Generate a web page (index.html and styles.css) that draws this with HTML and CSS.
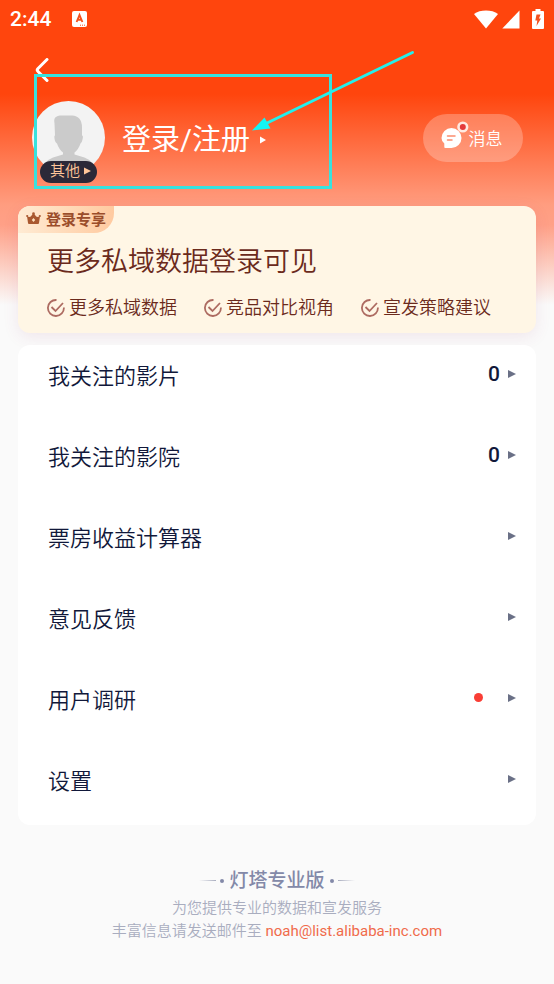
FILE: index.html
```html
<!DOCTYPE html>
<html lang="zh-CN">
<head>
<meta charset="utf-8">
<meta name="viewport" content="width=device-width, initial-scale=1">
<title>灯塔专业版</title>
<link rel="stylesheet" href="styles.css">
</head>
<body>
<div class="page">
  <header class="status">
    <span class="time">2:44</span>
    <svg class="app-badge" width="15" height="16" viewBox="0 0 15 16" aria-hidden="true">
      <rect width="15" height="16" rx="2" fill="#fff"/>
      <path d="M4.600 11 7.500 4 10.400 11M5.600 8.800h3.800" fill="none" stroke="#f4511e" stroke-width="1.900"/>
      <path d="M8 14.200h1M10 14.200h1M12 14.200h1" stroke="#f4511e"/>
    </svg>
    <div class="signals">
      <svg width="24" height="19" viewBox="0 0 24 19" aria-hidden="true"><path d="M0 4C6-.6 18-.6 24 4L12 18.500Z" fill="#fff"/></svg>
      <svg width="18" height="19" viewBox="0 0 18 19" aria-hidden="true"><path d="M17.500.500V18.500H.300Z" fill="#fff"/></svg>
      <svg class="battery" width="12" height="20" viewBox="0 0 12 20" aria-hidden="true"><path d="M3.500 0h5v2H11q1 0 1 1v16q0 1-1 1H1q-1 0-1-1V3q0-1 1-1h2.500Z" fill="#fff"/><path d="M4.500 5.500h4L7 9.500h2L4.500 17l.8-5.500h-2Z" fill="#f4511e"/></svg>
    </div>
  </header>

  <nav class="nav">
    <button class="back" type="button" aria-label="返回">
      <svg width="14" height="24" viewBox="0 0 14 24"><path d="M12 1.500 3 10.500Q1.500 12 3 13.500L12 22.500" fill="none" stroke="#fff" stroke-width="3" stroke-linecap="round"/></svg>
    </button>
  </nav>

  <section class="profile">
    <div class="avatar">
      <svg width="73" height="73" viewBox="0 0 73 73" aria-hidden="true">
        <defs><clipPath id="face"><circle cx="36.500" cy="36.500" r="36.500"/></clipPath></defs>
        <circle cx="36.500" cy="36.500" r="36.500" fill="#f3f3f3"/>
        <path clip-path="url(#face)" d="M24 16q2-2 5-1.500h11q10 .5 10 12v8q1.500 0 .500 4-.500 3-2 4-2 6-6 9v2l10 3q9 3 10 15H11q1-12 10-15l10-3v-2q-4-3-6-9-2-1-2.500-5-.500-3 .500-3l-.500-12Q21.500 17 24 16Z" fill="#cbcbcb"/>
      </svg>
      <button class="role" type="button">其他 <svg width="7" height="8" viewBox="0 0 7 8" aria-hidden="true"><path d="M0 .500 7 4 0 7.500Z" fill="#ffc69a"/></svg></button>
    </div>
    <a class="login" href="#login">登录/注册 <svg width="6" height="8" viewBox="0 0 6 8" aria-hidden="true"><path d="M0 .500 6 4 0 7.500Z" fill="#fff"/></svg></a>
    <button class="message" type="button">
      <svg width="28" height="28" viewBox="0 0 28 28" aria-hidden="true">
        <path d="M10.500 7A10 10 0 1 1 10.500 27H4.500q-1.500 0-1.200-1.500v-3Q.500 20 .500 17A10 10 0 0 1 10.500 7Z" fill="#fff"/>
        <path d="M6.500 15h7.500M6.500 19h4.500" stroke="#fb8c6d" stroke-width="1.500" stroke-linecap="round"/>
        <circle cx="21.800" cy="6" r="4.300" fill="#e43b3b" stroke="#ffeae2" stroke-width="2.600"/>
      </svg>
      消息
    </button>
  </section>

  <main class="content">
    <section class="promo">
      <div class="ribbon">
        <svg width="15" height="13" viewBox="0 0 15 13" aria-hidden="true"><path d="M1 4Q3 5.500 4.800 4.500L7.500 1l2.700 3.500Q12 5.500 14 4L13 11q0 1-1 1H3q-1 0-1-1Z" fill="#a9582f"/><circle cx="1.200" cy="4" r="1.100" fill="#a9582f"/><circle cx="13.800" cy="4" r="1.100" fill="#a9582f"/><circle cx="7.500" cy="1.500" r="1.300" fill="#a9582f"/><path d="M7.500 6 9.200 8 7.500 10 5.800 8Z" fill="#ffe1bd"/></svg>
        登录专享
      </div>
      <h1 class="promo-title">更多私域数据登录可见</h1>
      <ul class="benefits">
        <li><svg class="tick" viewBox="0 0 18 18" aria-hidden="true"><path d="M9.500 1A8 8 0 1 0 16.900 8.500M4.500 8l4 4 7.500-8" fill="none" stroke="#ad6b61" stroke-width="1.800"/></svg>更多私域数据</li>
        <li><svg class="tick" viewBox="0 0 18 18" aria-hidden="true"><path d="M9.500 1A8 8 0 1 0 16.900 8.500M4.500 8l4 4 7.500-8" fill="none" stroke="#ad6b61" stroke-width="1.800"/></svg>竞品对比视角</li>
        <li><svg class="tick" viewBox="0 0 18 18" aria-hidden="true"><path d="M9.500 1A8 8 0 1 0 16.900 8.500M4.500 8l4 4 7.500-8" fill="none" stroke="#ad6b61" stroke-width="1.800"/></svg>宣发策略建议</li>
      </ul>
    </section>

    <nav class="menu">
      <a href="#films"><span class="label">我关注的影片</span><span class="count">0</span><svg class="arrow" viewBox="0 0 8 8" aria-hidden="true"><path d="M0 0 8 4 0 8Z"/></svg></a>
      <a href="#cinemas"><span class="label">我关注的影院</span><span class="count">0</span><svg class="arrow" viewBox="0 0 8 8" aria-hidden="true"><path d="M0 0 8 4 0 8Z"/></svg></a>
      <a href="#calculator"><span class="label">票房收益计算器</span><svg class="arrow" viewBox="0 0 8 8" aria-hidden="true"><path d="M0 0 8 4 0 8Z"/></svg></a>
      <a href="#feedback"><span class="label">意见反馈</span><svg class="arrow" viewBox="0 0 8 8" aria-hidden="true"><path d="M0 0 8 4 0 8Z"/></svg></a>
      <a href="#survey"><span class="label">用户调研</span><span class="dot"></span><svg class="arrow" viewBox="0 0 8 8" aria-hidden="true"><path d="M0 0 8 4 0 8Z"/></svg></a>
      <a href="#settings"><span class="label">设置</span><svg class="arrow" viewBox="0 0 8 8" aria-hidden="true"><path d="M0 0 8 4 0 8Z"/></svg></a>
    </nav>
  </main>

  <footer class="footer">
    <p class="brand"><span class="rule"></span><span class="name">灯塔专业版</span><span class="rule right"></span></p>
    <p>为您提供专业的数据和宣发服务</p>
    <p>丰富信息请发送邮件至 <a href="mailto:noah@list.alibaba-inc.com">noah@list.alibaba-inc.com</a></p>
  </footer>

  <svg class="callout" width="420" height="200" viewBox="0 0 420 200" aria-hidden="true">
    <rect x="35.500" y="75.500" width="295" height="112" fill="none" stroke="#37e2de" stroke-width="3"/>
    <path d="M412.500 52.500 264 124.500" stroke="#24efeb" stroke-width="3" stroke-linecap="round"/>
    <path d="M252 130.500 264.500 117.500 270.500 128.500Z" fill="#14f4f4"/>
  </svg>
</div>
</body>
</html>
```
FILE: styles.css
```css
* { box-sizing: border-box; }

body {
  margin: 0;
  background: #fafafa;
  color: #11183a;
  font-family: Roboto, "Noto Sans CJK SC", sans-serif;
}

button {
  border: 0;
  padding: 0;
  font: inherit;
  color: inherit;
  background: none;
}

a { color: inherit; text-decoration: none; }

.page {
  position: relative;
  min-height: 100vh;
  background: linear-gradient(#ff450d 0, #ff450d 94px, #ff9d80 205px, #ffa087 225px, #fafafa 305px);
}

.status {
  display: flex;
  align-items: center;
  height: 38px;
  padding: 0 10px;
  color: #fff;
}

.time { font-size: 21px; font-weight: 500; }
.app-badge { margin-left: 21px; }
.signals { display: flex; align-items: center; gap: 4px; margin-left: auto; }
.battery { margin-left: 8px; }

.nav { height: 62px; padding: 20px 35px; }
.back { display: block; height: 24px; }
.back svg { display: block; }

.profile {
  display: flex;
  align-items: center;
  height: 106px;
  padding: 0 31px 31px 32px;
  color: #fff;
}

.avatar { position: relative; width: 73px; height: 73px; }

.role {
  position: absolute;
  left: 8px;
  bottom: -9px;
  display: flex;
  align-items: center;
  justify-content: flex-end;
  gap: 4px;
  width: 57px;
  height: 22px;
  padding: 0 6px 2px 0;
  border-radius: 11px;
  background: #2b2938;
  color: #ffc69a;
  font-size: 15px;
  font-weight: 350;
  line-height: 20px;
}

.login {
  display: flex;
  align-items: center;
  gap: 10px;
  margin-left: 17px;
  padding-top: 4px;
  font-size: 29px;
  line-height: 40px;
}

.message {
  display: flex;
  align-items: center;
  justify-content: center;
  width: 100px;
  height: 48px;
  margin-left: auto;
  padding: 0 3px 0 0;
  border-radius: 24px;
  background: rgba(255, 255, 255, .25);
  font-size: 17px;
  font-weight: 350;
}
.message svg { margin-bottom: 6px; }

.content {
  display: flex;
  flex-direction: column;
  gap: 12px;
  padding: 0 18px;
}

.promo {
  height: 127px;
  border-radius: 12px;
  background: #fff6e5;
  box-shadow: 0 4px 16px rgba(160, 60, 110, .1);
  color: #6b2a1c;
}

.ribbon {
  display: flex;
  align-items: center;
  gap: 5px;
  width: 96px;
  height: 27px;
  padding: 0 0 2px 8px;
  border-radius: 12px 0 20px 0;
  background: linear-gradient(90deg, #ffebd3, #ffcaa0);
  color: #9b4d2b;
  font-size: 15px;
  font-weight: 700;
}

.promo-title {
  margin: 9px 29px 12px;
  font-size: 27px;
  font-weight: 350;
  line-height: 40px;
}

.benefits {
  display: flex;
  gap: 27px;
  margin: 0;
  padding: 0 29px;
  list-style: none;
  font-size: 18px;
  font-weight: 350;
  line-height: 28px;
  white-space: nowrap;
}
.benefits li { display: flex; align-items: center; gap: 4px; }
.tick { width: 18px; height: 18px; }

.menu {
  display: flex;
  flex-direction: column;
  gap: 48px;
  padding: 12px 20px 30px 30px;
  border-radius: 12px;
  background: #fff;
  position: relative;
}
.menu a { display: flex; align-items: center; height: 33px; font-size: 22px; font-weight: 350; }
.label { flex: 1; }
.count { font-weight: 500; font-size: 21px; margin-right: 8px; }
.dot { width: 9px; height: 9px; margin-right: 25px; border-radius: 50%; background: #f93e35; }
.arrow { width: 8px; height: 8px; fill: #6a7086; }

.footer {
  padding-top: 41px;
  color: #a9adbf;
  font-size: 15px;
  font-weight: 350;
  line-height: 23px;
  text-align: center;
}
.footer p { margin: 0; }
.footer a { color: #f06b4b; font-weight: 400; }
.footer .brand {
  display: flex;
  align-items: center;
  justify-content: center;
  gap: 5px;
  height: 31px;
  padding-bottom: 2px;
  color: #8389a8;
  font-size: 19px;
  font-weight: 500;
}
.rule {
  display: flex;
  align-items: center;
  justify-content: flex-end;
  gap: 4px;
  width: 25px;
}
.rule::before {
  content: "";
  flex: 1;
  height: 1px;
  background: linear-gradient(90deg, transparent, #a9adbf);
}
.rule::after {
  content: "";
  width: 4px;
  height: 4px;
  border-radius: 50%;
  background: #8389a8;
}
.rule.right { flex-direction: row-reverse; }
.rule.right::before { background: linear-gradient(90deg, #a9adbf, transparent); }

.callout { position: absolute; top: 0; left: 0; pointer-events: none; }
```
